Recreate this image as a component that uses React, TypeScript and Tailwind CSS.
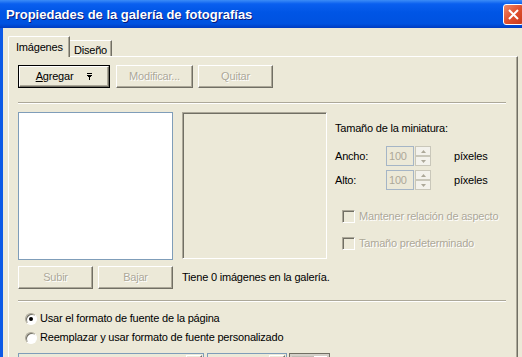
import React from 'react';

// Classic 3D borders in XP beige scheme
const raised = 'border border-t-white border-l-white border-r-[#716F64] border-b-[#716F64] shadow-[inset_-1px_-1px_0_#ACA899]';
const sunken = 'border border-t-[#ACA899] border-l-[#ACA899] border-r-white border-b-white shadow-[inset_1px_1px_0_#716F64]';

const DropArrow = () => (
  <svg width="5" height="7" viewBox="0 0 5 7" fill="#000" shapeRendering="crispEdges">
    <rect x="0" y="0" width="5" height="1" />
    <rect x="0" y="2" width="5" height="1" />
    <rect x="1" y="3" width="3" height="1" />
    <rect x="2" y="4" width="1" height="3" />
  </svg>
);

const Btn = ({ label, width, disabled }: { label: string; width: string; disabled?: boolean }) => (
  <div
    className={`h-[23px] ${width} ${raised} flex items-center justify-center ${
      disabled ? 'text-[#ACA899] [text-shadow:1px_1px_0_#fff]' : 'text-black'
    }`}
  >
    {label}
  </div>
);

const Spinner = () => (
  <div className="flex flex-col w-[16px] h-[20px] ml-[1px]">
    {[0, 1].map((i) => (
      <div
        key={i}
        className="h-[10px] bg-[#F3F2EC] border border-[#C9C7BA] flex items-center justify-center"
      >
        <svg width="5" height="3" viewBox="0 0 5 3" fill="#ACA899">
          {i === 0 ? <path d="M2.5 0L5 3H0z" /> : <path d="M0 0h5L2.5 3z" />}
        </svg>
      </div>
    ))}
  </div>
);

const SizeRow = ({ label }: { label: string }) => (
  <div className="flex items-center h-[20px]">
    <span className="w-[51px]">{label}</span>
    <div className="w-[28px] h-[20px] border border-[#A5B5C6] text-[#ACA899] flex items-center pl-[2px]">100</div>
    <Spinner />
    <span className="ml-[23px]">píxeles</span>
  </div>
);

const Check = ({ label }: { label: string }) => (
  <div className="flex items-center h-[16px] pl-[7px] text-[#ACA899] [text-shadow:1px_1px_0_#fff]">
    <div className={`w-[13px] h-[13px] ${sunken}`} />
    <span className="ml-[4px]">{label}</span>
  </div>
);

const Radio = ({ label, checked }: { label: string; checked?: boolean }) => (
  <div className="flex items-center h-[19px] pl-[7px]">
    <div className="w-[12px] h-[12px] rounded-full border border-t-[#ACA899] border-l-[#ACA899] border-r-white border-b-white shadow-[inset_1px_1px_0_#716F64] bg-white flex items-center justify-center">
      {checked && <div className="w-[4px] h-[4px] rounded-full bg-black" />}
    </div>
    <span className="ml-[3px]">{label}</span>
  </div>
);

export default function App() {
  return (
    <div className="w-[522px] h-[357px] overflow-hidden bg-[#ECE9D8] font-['Liberation_Sans',Arial,sans-serif] text-[11px] tracking-[-0.2px] text-black leading-none">
      <div className="w-[528px]">
        {/* title bar */}
        <div className="h-[28px] flex items-center justify-between pl-[6px] pr-[4px] bg-[linear-gradient(to_bottom,#3C8CF7_0%,#0A5FEF_14%,#0055E5_45%,#0052E0_85%,#003BC0_100%)]">
          <span className="text-white font-bold text-[13px] tracking-normal [text-shadow:1px_1px_0_#0A1A7A]">
            Propiedades de la galería de fotografías
          </span>
          <div className="w-[21px] h-[21px] rounded-[3px] border border-white bg-[linear-gradient(135deg,#F08A6A_0%,#E0502E_50%,#C8391C_100%)] flex items-center justify-center">
            <svg width="11" height="11" viewBox="0 0 11 11" stroke="#fff" strokeWidth="2">
              <path d="M1 1L10 10M10 1L1 10" />
            </svg>
          </div>
        </div>

        {/* body */}
        <div className="h-[329px] border-l-[3px] border-[#0D5AE6] pl-[5px] pt-[8px]">
          {/* tabs */}
          <div className="flex items-end h-[20px]">
            <div className="relative z-10 h-[21px] -mb-[1px] w-[62px] bg-[#ECE9D8] border-l border-t border-white rounded-tl-[2px] border-r border-r-[#716F64] shadow-[inset_-1px_0_0_#ACA899] pl-[7px] pt-[5px]">
              Imágenes
            </div>
            <div className="h-[16px] w-[42px] border-t border-white border-r border-r-[#716F64] shadow-[inset_-1px_0_0_#ACA899] pl-[4px] pt-[4px]">
              Diseño
            </div>
          </div>

          {/* tab panel */}
          <div className="w-[510px] h-[320px] border-l border-t border-white border-r border-r-[#716F64] shadow-[inset_-1px_0_0_#ACA899] pl-[9px] pt-[8px]">
            <div className="flex">
              <div className="h-[23px] w-[92px] border border-black flex">
                <div className={`flex-1 ${raised} flex items-center justify-center gap-[14px]`}>
                  <span>
                    <span className="underline">A</span>gregar
                  </span>
                  <DropArrow />
                </div>
              </div>
              <div className="ml-[6px]">
                <Btn label="Modificar..." width="w-[77px]" disabled />
              </div>
              <div className="ml-[5px]">
                <Btn label="Quitar" width="w-[75px]" disabled />
              </div>
            </div>

            <div className="mt-[14px] w-[488px] h-[2px] border-t border-[#ACA899] border-b border-b-white" />

            <div className="flex mt-[8px]">
              <div className="w-[155px] h-[148px] bg-white border border-[#7F9DB9]" />
              <div className={`ml-[9px] w-[145px] h-[147px] ${sunken}`} />
              <div className="ml-[8px] flex flex-col">
                <div className="mt-[9px] h-[14px] flex items-center">Tamaño de la miniatura:</div>
                <div className="mt-[11px]">
                  <SizeRow label="Ancho:" />
                </div>
                <div className="mt-[4px]">
                  <SizeRow label="Alto:" />
                </div>
                <div className="mt-[18px]">
                  <Check label="Mantener relación de aspecto" />
                </div>
                <div className="mt-[11px]">
                  <Check label="Tamaño predeterminado" />
                </div>
              </div>
            </div>

            <div className="flex items-center mt-[6px]">
              <Btn label="Subir" width="w-[75px]" disabled />
              <div className="ml-[5px]">
                <Btn label="Bajar" width="w-[75px]" disabled />
              </div>
              <span className="ml-[9px]">Tiene 0 imágenes en la galería.</span>
            </div>

            <div className="mt-[11px] w-[488px] h-[2px] border-t border-[#ACA899] border-b border-b-white" />

            <div className="mt-[7px]">
              <Radio label="Usar el formato de fuente de la página" checked />
              <Radio label="Reemplazar y usar formato de fuente personalizado" />
            </div>

            <div className="flex mt-[6px]">
              <div className="w-[186px] h-[21px] border border-[#7F9DB9] flex justify-end p-[1px]">
                <div className={`w-[16px] h-full ${raised} bg-[#ECE9D8]`} />
              </div>
              <div className="ml-[3px] w-[80px] h-[21px] border border-[#7F9DB9] flex justify-end p-[1px]">
                <div className={`w-[16px] h-full ${raised} bg-[#ECE9D8]`} />
              </div>
              <div className="ml-[2px] w-[41px] h-[21px] border border-[#716F64] bg-[#D4D0C8] flex p-[2px]">
                <div className="w-[22px] h-full bg-[#C0BDB5]" />
                <div className="flex-1 bg-white" />
              </div>
            </div>
          </div>
        </div>
      </div>
    </div>
  );
}
